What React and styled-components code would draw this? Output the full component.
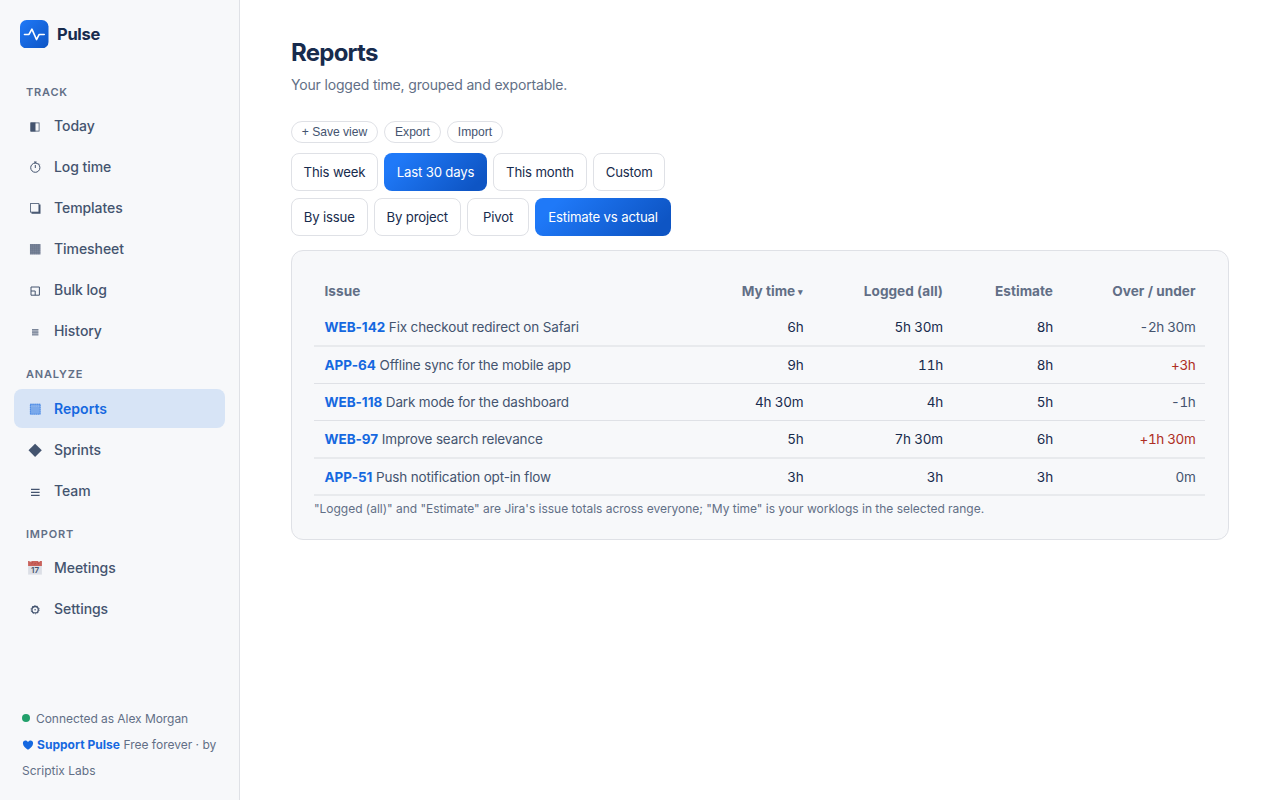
import React from 'react'
import { useState } from 'react'
import styled, { createGlobalStyle } from 'styled-components'


const nav = [
    {
        title: 'Track',
        items: ['Today', 'Log time', 'Templates', 'Timesheet', 'Bulk log', 'History']
    },
    {
        title: 'Analyze',
        items: ['Reports', 'Sprints', 'Team']
    },
    {
        title: 'Import',
        items: ['Meetings', 'Settings']
    }
]

const ranges = [
    { label: 'This week', width: 87 },
    { label: 'Last 30 days', width: 103 },
    { label: 'This month', width: 94 },
    { label: 'Custom', width: 72.4 }
]

const groupings = [
    { label: 'By issue', width: 76.5 },
    { label: 'By project', width: 87.5 },
    { label: 'Pivot', width: 62 },
    { label: 'Estimate vs actual', width: 136 }
]

const issues = [
    { id: 'WEB-142', name: 'Fix checkout redirect on Safari', mine: '6h', logged: '5h 30m', estimate: '8h', diff: '-2h 30m', height: 38, soft: true },
    { id: 'APP-64', name: 'Offline sync for the mobile app', mine: '9h', logged: '11h', estimate: '8h', diff: '+3h', height: 37 },
    { id: 'WEB-118', name: 'Dark mode for the dashboard', mine: '4h 30m', logged: '4h', estimate: '5h', diff: '-1h', height: 37 },
    { id: 'WEB-97', name: 'Improve search relevance', mine: '5h', logged: '7h 30m', estimate: '6h', diff: '+1h 30m', height: 38, soft: true },
    { id: 'APP-51', name: 'Push notification opt-in flow', mine: '3h', logged: '3h', estimate: '3h', diff: '0m', height: 37, soft: true }
]

const icons = {
    'Today': (
        <>
            <rect x="3.9" y="4.9" width="8.2" height="8.2" fill="none" stroke="currentColor" strokeWidth=".8" />
            <path d="M3.5 4.5h5v9h-5z" fill="currentColor" />
        </>
    ),
    'Log time': (
        <g fill="none" stroke="currentColor" strokeWidth="1">
            <circle cx="8.3" cy="8.7" r="4.6" />
            <path d="M8.3 9V6M7 3h2.6M8.3 3v1.2M11.7 4.5l1 1" />
        </g>
    ),
    'Templates': (
        <>
            <path d="M11.5 4.5h2v9.2H4.500v-1.800h7z" fill="currentColor" />
            <rect x="3.4" y="3.6" width="8.5" height="8.5" fill="#f7f8fa" stroke="currentColor" strokeWidth=".8" />
        </>
    ),
    'Timesheet': (
        <>
            <rect x="3" y="3" width="10.5" height="10.5" fill="currentColor" opacity=".7" />
            <path d="M3.3 3v10.5M5.4 3v10.5M7.5 3v10.5M9.6 3v10.5M11.6 3v10.5M3 5h10.5M3 7.2h10.5M3 9.4h10.5M3 11.5h10.5" stroke="currentColor" strokeWidth=".4" opacity=".35" />
        </>
    ),
    'Bulk log': (
        <path d="M4 5h8.4v8.2H4zM4 9h4.2v4.2" fill="none" stroke="currentColor" strokeWidth="1" />
    ),
    'History': (
        <>
            <rect x="5" y="6" width="6.4" height="6.4" fill="currentColor" opacity=".45" />
            <path d="M5 6.5h6.4M5 9.2h6.4M5 11.9h6.4" stroke="currentColor" strokeWidth=".9" opacity=".5" />
        </>
    ),
    'Reports': (
        <>
            <rect x="3" y="2.8" width="10.5" height="10.7" fill="currentColor" opacity=".48" />
            <path d="M3.3 3.2h9.9v10H3.3z" fill="none" stroke="currentColor" strokeWidth=".7" strokeDasharray="1.4 .7" opacity=".75" />
            <path d="M4.6 5.2h7.6" stroke="#fff" strokeWidth=".6" strokeDasharray=".7 1.4" opacity=".6" />
        </>
    ),
    'Sprints': (
        <path d="M8.1 1.7l6.7 6.6-6.7 6.6-6.6-6.6z" fill="currentColor" />
    ),
    'Team': (
        <path d="M4 6.3h8.6M4 9.3h8.6M4 12.3h8.6" stroke="currentColor" strokeWidth="1.2" />
    ),
    'Meetings': (
        <>
            <rect x="1.1" y="1.4" width="13.8" height="13.2" fill="#dcdfe6" />
            <rect x="1.1" y="1" width="13.8" height="5" fill="#c9625b" />
            <path d="M2.5 1.2h2M11 1.2h2" stroke="#f7f8fa" strokeWidth=".9" />
            <path d="M4.6 3.6l1.2-1M7.4 4.1l1.2-.5M10.4 2.8l1.3 1" stroke="#a13f3c" strokeWidth=".8" />
            <text x="8" y="13.2" textAnchor="middle" fontFamily="Inter, sans-serif" fontSize="8" fontWeight="600" fill="#44546f">17</text>
        </>
    ),
    'Settings': (
        <g fill="none" stroke="currentColor">
            <circle cx="8.1" cy="8.7" r="3.2" strokeWidth="1.3" />
            <circle cx="8.1" cy="8.7" r="4.1" strokeWidth=".9" strokeDasharray="1.2 1.376" />
            <circle cx="8.1" cy="8.7" r=".8" fill="currentColor" stroke="none" />
        </g>
    )
}


const Sidebar = ({ page, setPage }) => {
    return (
        <SidebarContainer>
            <Brand>
                <svg width="28.5" height="28.5" viewBox="0 0 28 28">
                    <defs>
                        <linearGradient id="logo" x1="0" y1="0" x2="1" y2="1">
                            <stop offset="0" stopColor="#1f79f8" />
                            <stop offset="1" stopColor="#0e55c4" />
                        </linearGradient>
                    </defs>
                    <rect width="28" height="28" rx="6.5" fill="url(#logo)" />
                    <path d="M4.4 14.200H8.800L11.700 9l4.500 10.200 2.700-5h4.900" fill="none" stroke="#fff" strokeWidth="1.6" strokeLinecap="round" strokeLinejoin="round" />
                </svg>
                <span>Pulse</span>
            </Brand>

            {nav.map(section => (
                <React.Fragment key={section.title}>
                    <SectionTitle $height={section.title === 'Analyze' ? 37 : 36}>{section.title}</SectionTitle>
                    {section.items.map(item => (
                        <NavItem key={item} $active={page === item} onClick={() => setPage(item)}>
                            <svg width="16" height="16" viewBox="0 0 16 16">{icons[item]}</svg>
                            {item}
                        </NavItem>
                    ))}
                </React.Fragment>
            ))}

            <SidebarFooter>
                <Status><i />Connected as Alex Morgan</Status>
                <Support>
                    <svg width="12" height="10" viewBox="0 0 12 10">
                        <path d="M6 9.8C3.6 8 .9 6 .9 3.2.9 1.5 2 .5 3.4.5 4.5.5 5.5 1.1 6 2 6.5 1.1 7.5.5 8.6.5 10 .5 11.1 1.5 11.1 3.2 11.1 6 8.4 8 6 9.8z" fill="currentColor" />
                    </svg>
                    <b>Support Pulse</b> <span>Free forever · by</span>
                    <br />
                    <span>Scriptix Labs</span>
                </Support>
            </SidebarFooter>
        </SidebarContainer>
    )
}


const App = () => {

    const [page, setPage] = useState('Reports')
    const [range, setRange] = useState('Last 30 days')
    const [grouping, setGrouping] = useState('Estimate vs actual')

    return (
        <>
            <GlobalStyle />
            <Layout>
                <Sidebar page={page} setPage={setPage} />
                <Main>
                    <h1>Reports</h1>
                    <Subtitle>Your logged time, grouped and exportable.</Subtitle>

                    <ButtonRow>
                        <Pill $width={87}>+ Save view</Pill>
                        <Pill $width={57}>Export</Pill>
                        <Pill $width={56}>Import</Pill>
                    </ButtonRow>
                    <ButtonRow $top={10}>
                        {ranges.map(({ label, width }) => (
                            <Segment key={label} $width={width} $active={range === label} onClick={() => setRange(label)}>{label}</Segment>
                        ))}
                    </ButtonRow>
                    <ButtonRow $top={7}>
                        {groupings.map(({ label, width }) => (
                            <Segment key={label} $width={width} $active={grouping === label} onClick={() => setGrouping(label)}>{label}</Segment>
                        ))}
                    </ButtonRow>

                    <Card>
                        <HeaderRow>
                            <span>Issue</span>
                            <span>My time <small>▾</small></span>
                            <span>Logged (all)</span>
                            <span>Estimate</span>
                            <span>Over / under</span>
                        </HeaderRow>
                        {issues.map(issue => (
                            <Row key={issue.id} $height={issue.height} $soft={issue.soft}>
                                <IssueCell><b>{issue.id}</b> {issue.name}</IssueCell>
                                <span>{issue.mine}</span>
                                <span>{issue.logged}</span>
                                <span>{issue.estimate}</span>
                                <Diff $over={issue.diff.startsWith('+')}>{issue.diff}</Diff>
                            </Row>
                        ))}
                        <Note>"Logged (all)" and "Estimate" are Jira's issue totals across everyone; "My time" is your worklogs in the selected range.</Note>
                    </Card>
                </Main>
            </Layout>
        </>
    )
}

export default App


const GlobalStyle = createGlobalStyle`
    *{box-sizing: border-box;}
    body{
        margin: 0;
        background-color: #fff;
        color: #172b4d;
        font-family: Inter, "Liberation Sans", sans-serif;
        font-size: 14px;
    }
    button{
        font: inherit;
        margin: 0;
        cursor: pointer;
    }
`

const Layout = styled.div`
    display: flex;
    height: 100vh;
    overflow: hidden;
`

const SidebarContainer = styled.nav`
    display: flex;
    flex-direction: column;
    flex: none;
    width: 240px;
    padding: 20px 14px;
    background-color: #f7f8fa;
    border-right: 1px solid #dfe1e6;
`

const Brand = styled.div`
    display: flex;
    align-items: center;
    gap: 8.5px;
    height: 28px;
    margin: 0 0 22px 6px;
    font-size: 16.5px;
    font-weight: 700;
    letter-spacing: -.3px;
`

const SectionTitle = styled.div`
    flex: none;
    height: ${({ $height }) => $height}px;
    padding: 15px 12px 7px;
    font-size: 11px;
    font-weight: 600;
    line-height: 14px;
    letter-spacing: .8px;
    text-transform: uppercase;
    color: #626f86;
`

const NavItem = styled.button`
    display: flex;
    align-items: center;
    flex: none;
    gap: 11px;
    height: 39px;
    margin-bottom: 2px;
    padding: 0 13px;
    border: 0;
    border-radius: 8px;
    background-color: ${({ $active }) => $active ? '#d7e4f6' : 'transparent'};
    color: ${({ $active }) => $active ? '#1568e0' : '#44546f'};
    font-size: 14px;
    font-weight: ${({ $active }) => $active ? 600 : 500};
    letter-spacing: ${({ $active }) => $active ? '.04px' : '-.06px'};
    text-align: left;
`

const SidebarFooter = styled.div`
    margin-top: auto;
    padding: 0 8px;
    font-size: 12px;
    color: #626f86;
    margin-bottom: -4px;
`

const Status = styled.div`
    display: flex;
    align-items: center;
    gap: 6px;
    height: 26px;
    margin-bottom: 1px;
    letter-spacing: -.05px;
    i{
        width: 8px;
        height: 8px;
        border-radius: 50%;
        background-color: #22a06b;
    }
`

const Support = styled.div`
    line-height: 26px;
    white-space: nowrap;
    svg{
        color: #1568e0;
        margin-right: 3px;
        vertical-align: -1px;
    }
    b{
        font-weight: 700;
        letter-spacing: .04px;
        color: #1568e0;
    }
    span{
        display: inline-block;
        line-height: 16px;
    }
`

const Main = styled.main`
    flex: 1;
    padding: 37px 51px;
    h1{
        margin: 0;
        font-size: 24px;
        font-weight: 700;
        line-height: 32px;
        letter-spacing: -.75px;
    }
`

const Subtitle = styled.p`
    margin: 6px 0 26px;
    font-size: 14px;
    line-height: 20px;
    letter-spacing: -.17px;
    color: #626f86;
`

const ButtonRow = styled.div`
    display: flex;
    gap: 6px;
    margin-top: ${({ $top }) => $top || 0}px;
`

const Pill = styled.button`
    width: ${({ $width }) => $width}px;
    height: 22px;
    padding: 0;
    border: 1px solid #dfe1e6;
    border-radius: 11px;
    background-color: #fff;
    color: #44546f;
    font-family: "Liberation Sans", Arial, sans-serif;
    font-size: 12.1px;
`

const Segment = styled.button`
    width: ${({ $width }) => $width}px;
    height: 38px;
    padding: 0;
    border: ${({ $active }) => $active ? '0' : '1px solid #dfe1e6'};
    border-radius: 8px;
    background: ${({ $active }) => $active ? 'linear-gradient(135deg, #1f79f8 15%, #0e55c4 88%)' : '#fff'};
    color: ${({ $active }) => $active ? '#fff' : '#172b4d'};
    font-size: 13.2px;
    letter-spacing: -.17px;
    white-space: nowrap;
`

const Card = styled.section`
    height: 290px;
    margin-top: 14px;
    padding: 23px 22px;
    border: 1px solid #dfe1e6;
    border-radius: 12px;
    background-color: #f7f8fa;
`

const TableRow = styled.div`
    display: grid;
    grid-template-columns: 1fr 130px 139.5px 110px 142.5px;
    align-items: center;
    padding: 0 9.5px 0 10.5px;
    margin-right: 1px;
    > span{
        text-align: right;
        white-space: nowrap;
    }
    > span:first-child{
        text-align: left;
    }
`

const HeaderRow = styled(TableRow)`
    height: 35px;
    padding-bottom: 2px;
    font-size: 13.6px;
    font-weight: 700;
    letter-spacing: .03px;
    color: #626f86;
    small{
        font-size: 9px;
        line-height: 1;
        vertical-align: 1px;
    }
`

const Row = styled(TableRow)`
    height: ${({ $height }) => $height}px;
    border-bottom: ${({ $soft }) => $soft ? '2px solid #e8eaed' : '1px solid #dfe1e6'};
    font-size: 13.5px;
    font-variant-numeric: tabular-nums;
    letter-spacing: -.2px;
`

const IssueCell = styled.span`
    color: #44546f;
    font-variant-numeric: normal;
    letter-spacing: -.16px;
    b{
        font-weight: 700;
        letter-spacing: -.03px;
        color: #1568e0;
    }
`

const Diff = styled.span`
    color: ${({ $over }) => $over ? '#ae2e24' : '#44546f'};
    letter-spacing: -.35px;
`

const Note = styled.p`
    margin: 5px 0 0;
    font-size: 12px;
    line-height: 16px;
    letter-spacing: -.02px;
    color: #626f86;
`
